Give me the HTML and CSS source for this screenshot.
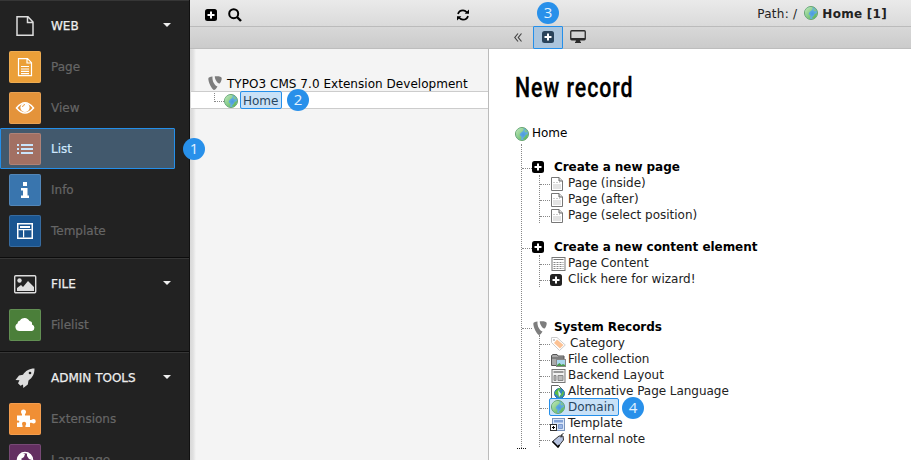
FILE: index.html
```html
<!DOCTYPE html>
<html lang="en">
<head>
<meta charset="utf-8">
<title>New record</title>
<link rel="stylesheet" href="styles.css">
</head>
<body>
<svg class="defs" aria-hidden="true">
  <defs>
    <radialGradient id="sea" cx=".6" cy=".55" r=".65"><stop offset="0" stop-color="#4b9ae0"/><stop offset=".55" stop-color="#68b2df"/><stop offset="1" stop-color="#62aeb9"/></radialGradient>
    <linearGradient id="land" x2="1" y2="1"><stop stop-color="#c0e9bd"/><stop offset="1" stop-color="#52b04f"/></linearGradient>
  </defs>
  <symbol id="globe" viewBox="0 0 14 14"><circle cx="7" cy="7" r="6.500" fill="url(#sea)" stroke="#68a56c"/><path d="M1 6C1 3 4 .8 7.500 1L9 2 8 4 5.500 6 4.500 8 6.500 10 6 13C3 12.500 1 10 1 6ZM10 2.500L12 4.500 11 5.500 9.500 4.500ZM12.900 7C13 10 11.500 12 9 13L8 11.500 10 9.500 10.500 8Z" fill="url(#land)"/></symbol>
  <symbol id="plus" viewBox="0 0 12 12"><rect width="12" height="12" rx="2.500" fill="currentColor"/><path d="M6 2.500v7M2.500 6h7" stroke="#fff" stroke-width="2"/></symbol>
  <symbol id="typo3" viewBox="0 0 14 14"><path d="M4.500.6C4 5 6.500 9.800 9.500 10.500 8.500 12.500 7 14 5.800 13.900 3.500 13 .3 6 .3 2.800.3 1.500 2 .9 4.500.6ZM6.800.3C10 0 13.700.3 13.700 2.200 13.700 4.500 12.300 7.500 11.200 7.500 9.500 7.500 6.500 3 6.800.3Z" fill="#7d7d7d"/></symbol>
  <symbol id="sheet" viewBox="0 0 12 14"><path d="M.5.5h7.500l3.500 3.500v9.500H.5Z" fill="#fff" stroke="#777"/><path d="M2 7h8v5H2Z" fill="#e3e3e3"/><path d="M2 5.500h7" stroke="#ccc" stroke-dasharray="2 1"/><path d="M8 .5V4h3.500" fill="#ddd" stroke="#666"/></symbol>
</svg>
<div class="app">
  <nav class="menu">
    <section class="group">
      <h2 class="group-head"><svg class="head-icon" viewBox="0 0 24 24"><path d="M4 2.700h11l5 5.300v13.300H4ZM14.500 3v5.500H20" fill="none" stroke="#ddd" stroke-width="1.500"/></svg><span>WEB</span><i class="caret"></i></h2>
      <a class="item"><svg class="tile page" viewBox="0 0 32 32"><path d="M9.500 7.700h9l4 4v13h-13ZM18 8v4h4.500M12 15.500h8M12 18h8M12 20.300h8M12 22.600h8" fill="none" stroke="#fff" stroke-width="1.200"/></svg><span>Page</span></a>
      <a class="item"><svg class="tile view" viewBox="0 0 32 32"><path d="M7.500 16Q16 5.500 24.500 16 16 26 7.500 16Z" fill="none" stroke="#fff" stroke-width="1.500"/><circle cx="16" cy="15.500" r="4.600" fill="#fff"/><path d="M13.500 15a3 3 0 0 1 2.500-2.500" stroke="#e8963b" fill="none"/></svg><span>View</span></a>
      <a class="item selected"><svg class="tile list" viewBox="0 0 32 32"><path d="M8 12h2M8 16h2M8 20h2M12 12h12M12 16h12M12 20h12" stroke="#c9e4fb" stroke-width="2"/></svg><span>List</span><b class="badge one">1</b></a>
      <a class="item"><svg class="tile info" viewBox="0 0 32 32"><path d="M14 8h4v4h-4ZM12 14h6.500v7.500H20V24h-8v-2.500h2V16.500h-2Z" fill="#fff"/></svg><span>Info</span></a>
      <a class="item"><svg class="tile template" viewBox="0 0 32 32"><path d="M8 8h16v16H8Z" fill="#fff"/><path d="M9.500 9.500h13v13h-13Z" fill="#1a5591"/><path d="M11 11h10v2H11ZM9.500 14h13v1.200h-13ZM14 14.500h1.200v8H14Z" fill="#fff"/></svg><span>Template</span></a>
    </section>
    <section class="group">
      <h2 class="group-head"><svg class="head-icon" viewBox="0 0 24 24"><rect x="1.700" y="3.700" width="21" height="17" rx="1" fill="none" stroke="#ddd" stroke-width="1.400"/><circle cx="6.500" cy="8.500" r="2.200" fill="#ddd"/><path d="M4 19v-3l4-3 2 2 5-6 6 6v4Z" fill="#ddd"/></svg><span>FILE</span><i class="caret"></i></h2>
      <a class="item"><svg class="tile file" viewBox="0 0 32 32"><path d="M10.500 22a4 4 0 0 1-2-7.500 3 3 0 0 1 2.500-3 5.500 5.500 0 0 1 9.500.5 3 3 0 0 1 2.500 3.500 3.400 3.400 0 0 1 0 6.500Z" fill="#fff"/></svg><span>Filelist</span></a>
    </section>
    <section class="group">
      <h2 class="group-head"><svg class="head-icon" viewBox="0 0 24 24"><path d="M21.500 2.500C16 2.500 12.500 5 10 8.700L6 9.500 2.500 14l4 .2-1.500 3 2.500 2.500 2.500-1.200.3 3.500 4.500-3.500.7-4C19.500 11.500 21.500 8 21.500 2.500Z" fill="#ddd"/><circle cx="17" cy="7" r="1.300" fill="#222"/></svg><span>ADMIN TOOLS</span><i class="caret"></i></h2>
      <a class="item"><svg class="tile ext" viewBox="0 0 32 32"><path d="M8 12.500h5c.5-1.500-1-2-1-3.500a2.500 2.500 0 0 1 5 0c0 1.500-1.500 2-1 3.500h5v4.500c1.500.5 2-1 3.500-1a2.200 2.200 0 0 1 0 4.500c-1.500 0-2-1-3.500-.5V24h-4.500c-.5-1.500.7-2 .7-3.200a2 2 0 0 0-4.200 0c0 1.200 1 1.700.5 3.200H8v-4.500c1.300.5 1.700-.3 2.500-.6-.8-1.300-1.200-1.500-2.500-1.200Z" fill="#fff"/></svg><span>Extensions</span></a>
      <a class="item"><svg class="tile lang" viewBox="0 0 32 32"><circle cx="16" cy="16" r="7.500" fill="none" stroke="#fff" stroke-width="1.600"/><path d="M9 13l4-4 3 1-1 3-3 2 2 2-2 3-3-3ZM18 9l4 2 1 5-3-1-2-3Z" fill="#fff"/></svg><span>Language</span></a>
    </section>
  </nav>
  <div class="workspace">
    <header class="docheader">
      <div class="bar top">
        <svg class="add" width="12" height="12"><use href="#plus"/></svg>
        <svg class="search" width="14" height="14" viewBox="0 0 14 14"><circle cx="5.700" cy="5.700" r="4.500" fill="none" stroke="#000" stroke-width="2"/><path d="M9 9l4 4" stroke="#000" stroke-width="2.400"/></svg>
        <svg class="refresh" width="12" height="12" viewBox="0 0 12 12"><path d="M1 5Q2 1.300 6 1.300q2 0 4 2M11 7q-1 3.700-5 3.700-2 0-4-2" fill="none" stroke="#000" stroke-width="1.700"/><path d="M12 .5V4.800H7.700ZM0 11.500V7.200h4.300Z"/></svg>
        <b class="badge three">3</b>
        <div class="path"><span>Path: /</span><svg width="14" height="14"><use href="#globe"/></svg><strong>Home [1]</strong></div>
      </div>
      <div class="bar tools">
        <svg class="collapse" width="8" height="9" viewBox="0 0 8 9"><path d="M4 .5L.8 4.500 4 8.500M7.500.5L4.300 4.500 7.500 8.500" fill="none" stroke="#444" stroke-width="1.200"/></svg>
        <span class="new-button"><svg width="12" height="12"><use href="#plus"/></svg></span>
        <svg class="monitor" width="16" height="13" viewBox="0 0 16 13"><rect x=".75" y=".75" width="14.500" height="9" rx="1" fill="none" stroke="#2b2b2b" stroke-width="1.300"/><path d="M1 8h14v2H1ZM6 10h4l.5 2h.5v1H5v-1h.500Z" fill="#2b2b2b"/></svg>
      </div>
    </header>
    <div class="panes">
      <aside class="pagetree">
        <div class="root"><svg width="14" height="14"><use href="#typo3"/></svg><span>TYPO3 CMS 7.0 Extension Development</span></div>
        <div class="node"><i class="elbow"></i><svg width="14" height="14"><use href="#globe"/></svg><span class="picked">Home</span><b class="badge two">2</b></div>
      </aside>
      <main class="content">
        <h1>New record</h1>
        <div class="home"><svg width="14" height="14"><use href="#globe"/></svg><span>Home</span></div>
        <div class="records">
          <section class="kind">
            <h3><i class="stub"></i><svg width="12" height="12"><use href="#plus"/></svg><span class="k1">Create a new page</span></h3>
            <ul>
              <li><i class="stub"></i><svg class="ic doc" width="12" height="14"><use href="#sheet"/></svg><span>Page (inside)</span></li>
              <li><i class="stub"></i><svg class="ic doc" width="12" height="14"><use href="#sheet"/></svg><span>Page (after)</span></li>
              <li><i class="stub"></i><svg class="ic doc" width="12" height="14"><use href="#sheet"/></svg><span>Page (select position)</span></li>
            </ul>
          </section>
          <section class="kind">
            <h3><i class="stub"></i><svg width="12" height="12"><use href="#plus"/></svg><span class="k2">Create a new content element</span></h3>
            <ul>
              <li><i class="stub"></i><svg class="ic" width="14" height="14" viewBox="0 0 14 14"><rect x=".5" y=".5" width="13" height="13" fill="#fff" stroke="#777"/><path d="M2 2.500h10" stroke="#777"/><path d="M2 5.500h10M2 7.500h10M2 9.500h10M2 11.500h10" stroke="#888" stroke-dasharray="2 1"/></svg><span>Page Content</span></li>
              <li><i class="stub"></i><svg class="ic wiz" width="12" height="12"><use href="#plus"/></svg><span>Click here for wizard!</span></li>
            </ul>
          </section>
          <section class="kind system">
            <h3><i class="stub"></i><svg class="shield" width="14" height="14"><use href="#typo3"/></svg><span class="k3">System Records</span></h3>
            <ul>
              <li class="category"><i class="stub"></i><svg class="ic" width="15" height="14" viewBox="0 0 15 14"><path d="M.5.5h5.500L14.300 8 8.500 13.500.5 5.500Z" fill="#fff" stroke="#ccc"/><path d="M6 2.500L12.500 8 9 11.500 3 6Z" fill="#fcc294"/><circle cx="3" cy="3" r="1" fill="#bbb"/></svg><span>Category</span></li>
              <li><i class="stub"></i><svg class="ic" width="15" height="14" viewBox="0 0 15 14"><path d="M.5 12.500V2.500l1.500-1h4l1 1.500h6v9.500Z" fill="#aaa" stroke="#555"/><path d="M1 5h12" stroke="#555"/><rect x="5.500" y="6.500" width="9" height="7" fill="#a9d6ee" stroke="#888"/><path d="M6 13V12l2.500-2 2 2 1.500-1 2 1v1Z" fill="#4a9a4b"/></svg><span>File collection</span></li>
              <li><i class="stub"></i><svg class="ic" width="14" height="14" viewBox="0 0 14 14"><rect x=".5" y=".5" width="13" height="13" fill="#f1f1f1" stroke="#777"/><path d="M2 2h10v2H2Z" fill="#999"/><path d="M2.500 6.500h2v5h-2ZM6.500 6.500h5v5h-5Z" fill="#bbb" stroke="#888"/></svg><span>Backend Layout</span></li>
              <li><i class="stub"></i><svg class="ic" width="15" height="14" viewBox="0 0 15 14"><path d="M.5.5h7l4 4v9H.5Z" fill="#fff" stroke="#666"/><circle cx="8.500" cy="8.500" r="5" fill="#3385c6" stroke="#286fa8"/><path d="M4 7l4-4 2 1-2 3 2 2-1 4-3-3-2-1ZM12 5l1 3-2 4-1-2 1-2Z" fill="#5cbc42"/><path d="M7 5l3 4-2 3Z" fill="#d8f2ff"/></svg><span class="alt">Alternative Page Language</span></li>
              <li class="domain"><i class="stub"></i><span class="picked"><svg width="14" height="14"><use href="#globe"/></svg><span>Domain</span></span><b class="badge four">4</b></li>
              <li><i class="stub"></i><svg class="ic tpl" width="15" height="15" viewBox="0 0 15 15"><rect x="2.500" y="1.500" width="12" height="12" fill="#dce8fa" stroke="#7a94bd"/><path d="M4 3h9v2.500H4Z" fill="#83a3d8"/><path d="M8.500 7.500h4v4h-4Z" fill="#9bb7e5" stroke="#7c9ad0"/><rect x=".5" y="7.500" width="6" height="6" fill="#fff" stroke="#333"/><path d="M3.500 9v3M2 10.500h3" stroke="#000"/></svg><span>Template</span></li>
              <li><i class="stub"></i><svg class="ic" width="15" height="15" viewBox="0 0 14 15"><path d="M1 8.500L7.500 3h4l.5 4-5.500 7Z" fill="#b5c2df" stroke="#333"/><path d="M1 8.500L6.500 14 8 12" stroke="#000" stroke-width="1.600" fill="none"/><path d="M9.500 4.500Q9 1 12 .5" stroke="#222" fill="none"/></svg><span>Internal note</span></li>
            </ul>
          </section>
        </div>
        <i class="tail"></i>
      </main>
    </div>
  </div>
</div>
</body>
</html>
```
FILE: styles.css
```css
* { box-sizing: border-box; }
body { margin: 0; width: 911px; height: 460px; overflow: hidden; font: 12px/16px "DejaVu Sans", Verdana, sans-serif; color: #222; }
svg { display: block; flex: none; }
span { white-space: nowrap; }
.defs { width: 0; height: 0; position: absolute; }
.app { display: flex; height: 460px; overflow: hidden; }

/* Module menu */
.menu { width: 190px; flex: none; background: #222; border-right: 1px solid #111; }
.group { border-top: 1px solid #0c0c0c; padding-bottom: 6px; }
.group:first-child { margin-top: -1px; }
.group-head { display: flex; align-items: center; height: 46px; margin: 0; padding: 4px 18px 0 13px; border-top: 1px solid #363636; font-size: 12px; font-weight: normal; color: #eee; -webkit-text-stroke: .25px #eee; }
.group-head span { margin-left: 14px; flex: 1; }
.head-icon { width: 24px; height: 24px; }
.caret { border: 4px solid transparent; border-top-color: #eee; border-bottom: 0; margin-top: -2px; }
.item { position: relative; display: flex; align-items: center; height: 41px; padding-left: 9px; color: #666; }
.item span { margin-left: 10px; -webkit-text-stroke: .2px; }
.tile { width: 32px; height: 32px; border-radius: 2px; box-shadow: inset 0 0 0 1px rgba(255,255,255,.13); }
.page { background: #eb9f38; }
.view { background: #e4933a; }
.list { background: #a27063; }
.info { background: #3975ae; }
.template { background: #1a5591; }
.file { background: #4b7f3a; }
.ext { background: #f08f35; }
.lang { background: #632f61; }
.selected { width: 175px; padding-left: 8px; border: 1px solid #248fea; border-radius: 1px; background: #42596d; color: #cfe8fd; }

/* Numbered markers */
.badge { width: 22px; height: 22px; border-radius: 50%; background: #2890ea; color: #e2f2ff; font: 15px/21px "Open Sans", sans-serif; text-align: center; }
.one { position: absolute; left: 182px; top: 9px; z-index: 2; }

/* Document header */
.workspace { flex: 1; min-width: 0; display: flex; flex-direction: column; }
.docheader { height: 49px; border-bottom: 1px solid #bdbdbd; }
.bar { display: flex; align-items: center; }
.top { height: 27px; background: linear-gradient(#eaeaea, #dadada); border-bottom: 1px solid #bbb; color: #000; padding: 3px 24px 0 15px; }
.search { margin-left: 11px; }
.refresh { margin-left: 215px; }
.three { margin-left: 68px; margin-top: -4px; }
.path { display: flex; align-items: center; margin: -2px 0 0 auto; color: #222; }
.path span { letter-spacing: .25px; }
.path svg { margin: -1px 4px 0 7px; }
.path strong { letter-spacing: .28px; }
.tools { height: 21px; background: linear-gradient(#d8d8d8, #cbcbcb); padding-left: 324px; }
.new-button { display: flex; align-items: center; justify-content: center; width: 30px; height: 23px; margin: -1px 7px -1px 11px; padding-bottom: 1px; border: 1px solid #248fea; border-radius: 1px; background: #abc5dd; color: #29435b; }
.monitor { margin-top: -2px; }

/* Page tree */
.panes { flex: 1; display: flex; min-height: 0; }
.pagetree { width: 299px; flex: none; background: linear-gradient(90deg, #d8d8d8, #e0e0e0 3px, #f4f4f4 6px); border-right: 1px solid #bbb; color: #000; }
.root { display: flex; align-items: center; height: 42px; padding: 27px 0 0 18px; }
.root svg { margin-top: -2px; }
.root span { margin-left: 5px; letter-spacing: .04px; }
.node { display: flex; align-items: center; height: 18px; margin-left: 1px; padding-left: 23px; background: #fff; border-top: 1px solid #ccc; border-bottom: 1px solid #ccc; }
.node svg { margin-top: 2px; }
.elbow { width: 10px; height: 9px; margin-top: -6px; border-left: 1px dotted #888; border-bottom: 1px dotted #888; }
.picked { border: 1px solid #248fea; border-radius: 2px; background: #c8e1f7; color: #28465f; }
.node .picked { width: 42px; height: 18px; margin-left: 2px; padding-left: 2px; line-height: 18px; }
.two { margin-left: 5px; }

/* New record form */
.content { flex: 1; background: #fff; padding: 22px 0 0 25px; }
h1 { margin: 0 0 0 1px; height: 35px; color: #000; font: 500 27px/35px Roboto, sans-serif; letter-spacing: 1.2px; transform: scaleX(.79); transform-origin: 0 50%; white-space: nowrap; -webkit-text-stroke: .3px; }
.home { display: flex; height: 16px; margin-top: 19px; align-items: center; color: #000; }
.home svg { margin: 2px 0 0 1px; }
.home span { margin-left: 3px; }
.records { height: 304px; margin: 3px 0 0 7px; padding-top: 15px; border-left: 1px dotted #888; }
.kind { height: 80px; }
.kind h3 { display: flex; align-items: center; height: 16px; margin: 0; font-size: 12px; line-height: 16px; color: #000; }
.stub { width: 10px; height: 1px; flex: none; border-top: 1px dotted #888; margin-top: 2px; }
.kind h3 span { margin-left: 10px; letter-spacing: -.05px; }
.kind h3 .shield { margin-left: 1px; margin-top: 2px; }
.kind h3 .k3 { margin-left: 7px; }
.kind ul { list-style: none; margin: 0 0 0 17px; padding: 0; border-left: 1px dotted #888; }
.kind li { display: flex; align-items: center; height: 16px; }
.kind li:last-child { margin-bottom: -7px; }
.kind li > .ic { margin: 2px 2px 0 1px; width: 15px; }
.kind li > .doc { width: 12px; margin-right: 5px; }
.kind li > .wiz { width: 12px; margin: 1px 6px 0 0; }
.kind li > .tpl { margin-left: 0; margin-right: 3px; }
.kind li.category > span { margin-left: 2px; }
.kind .alt { letter-spacing: -.04px; }
.kind .domain .picked { display: flex; align-items: center; width: 70px; height: 18px; padding-left: 1px; margin-left: -1px; }
.domain .picked span { margin-left: 3px; }
.four { margin: 2px 0 0 3px; flex: none; }
.tail { display: block; width: 9px; margin-left: 3px; border-top: 1px dotted #111; }
```
